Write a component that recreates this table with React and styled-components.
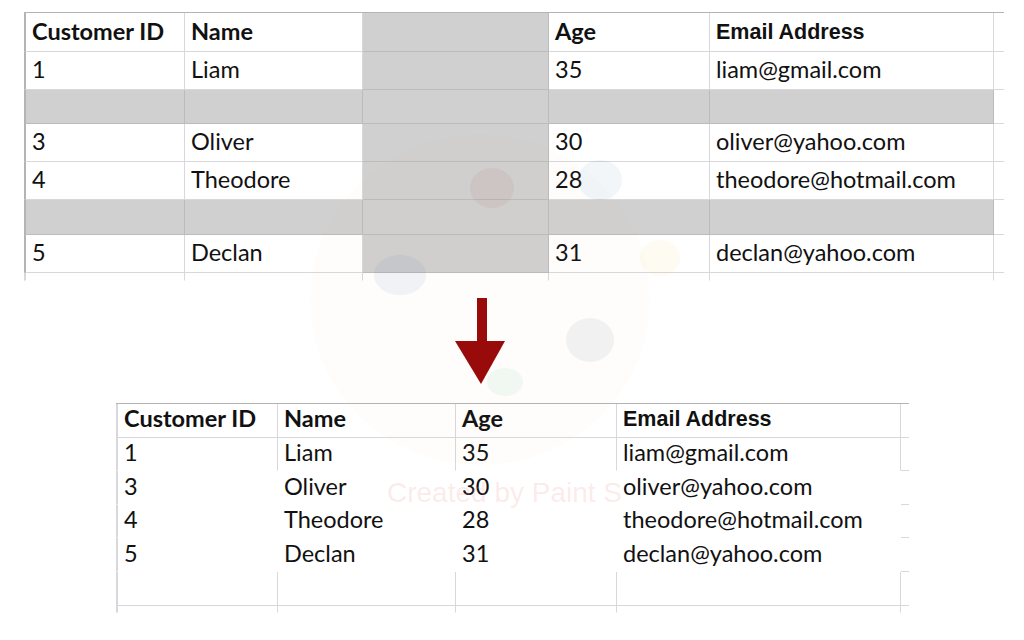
import React from 'react';
import styled, { createGlobalStyle } from 'styled-components';

const GlobalStyle = createGlobalStyle`
  html, body {
    margin: 0;
    padding: 0;
    background: #ffffff;
  }
  body {
    font-family: Lato, 'Liberation Sans', sans-serif;
    color: #111111;
  }
`;

const Page = styled.div`
  position: relative;
  width: 1024px;
  height: 640px;
  overflow: hidden;
  display: flex;
  flex-direction: column;
`;

const Sheet = styled.div`
  display: flex;
  flex-direction: column;
  align-self: flex-start;
  margin: ${(p) => p.$margin};
  border-top: 1px solid ${(p) => p.$edge};
`;

const Row = styled.div`
  display: flex;
  height: ${(p) => p.$h}px;
`;

const Cell = styled.div`
  box-sizing: border-box;
  flex: none;
  width: ${(p) => p.$w}px;
  display: flex;
  align-items: flex-end;
  padding: 0 0 ${(p) => p.$pb}px 6px;
  background: ${(p) => (p.$fill ? '#d0d0d0' : 'transparent')};
  border-left: ${(p) => (p.$first ? `2px solid ${p.$edge}` : 'none')};
  border-right: 1px solid ${(p) => p.$right || 'transparent'};
  border-bottom: 1px solid ${(p) => p.$bottom || 'transparent'};
  font-family: ${(p) =>
    p.$arial ? "'Liberation Sans', Arial, sans-serif" : "Lato, 'Liberation Sans', sans-serif"};
  font-size: ${(p) => (p.$arial ? 21.5 : 23.5)}px;
  font-weight: ${(p) => (p.$bold ? 700 : 400)};
  line-height: 1;
  white-space: nowrap;
  color: #111111;
`;

const Stub = styled.div`
  box-sizing: border-box;
  flex: none;
  width: ${(p) => p.$w}px;
  border-bottom: 1px solid ${(p) => p.$bottom || 'transparent'};
`;

const ArrowBox = styled.div`
  margin: 17px 0 0 455px;
  width: 50px;
  height: 86px;
  flex: none;
`;

const Watermark = styled.div`
  position: absolute;
  inset: 0;
  pointer-events: none;
`;

const WatermarkText = styled.div`
  position: absolute;
  left: 387px;
  top: 477px;
  font-family: 'Liberation Sans', Arial, sans-serif;
  font-size: 28px;
  color: rgba(240, 150, 150, 0.2);
  white-space: nowrap;
`;

const LIGHT = '#d8d8dc';
const DARK = '#bcbcbc';
const EDGE = '#b4b4b4';

const topCols = [161, 178, 186, 161, 284];
const topRows = [
  { h: 39, head: true, cells: ['Customer ID', 'Name', '', 'Age', 'Email Address'] },
  { h: 38, cells: ['1', 'Liam', '', '35', 'liam@gmail.com'] },
  { h: 34, blank: true },
  { h: 38, cells: ['3', 'Oliver', '', '30', 'oliver@yahoo.com'] },
  { h: 38, cells: ['4', 'Theodore', '', '28', 'theodore@hotmail.com'] },
  { h: 35, blank: true },
  { h: 38, cells: ['5', 'Declan', '', '31', 'declan@yahoo.com'] },
];

const bottomCols = [162, 178, 161, 284];
const bottomRows = [
  { h: 34, head: true, lines: true, under: true, cells: ['Customer ID', 'Name', 'Age', 'Email Address'] },
  { h: 33, lines: true, cells: ['1', 'Liam', '35', 'liam@gmail.com'] },
  { h: 34, cells: ['3', 'Oliver', '30', 'oliver@yahoo.com'] },
  { h: 33, cells: ['4', 'Theodore', '28', 'theodore@hotmail.com'] },
  { h: 34, cells: ['5', 'Declan', '31', 'declan@yahoo.com'] },
  { h: 34, lines: true, under: true, cells: ['', '', '', ''] },
];

function TopTable() {
  return (
    <Sheet $margin="12px 0 0 24px" $edge={EDGE}>
      {topRows.map((row, r) => (
        <Row key={r} $h={row.h}>
          {topCols.map((w, c) => {
            const fill = row.blank || c === 2;
            const text = row.blank ? '' : row.cells[c];
            return (
              <Cell
                key={c}
                $w={w}
                $first={c === 0}
                $edge={EDGE}
                $fill={fill}
                $bold={row.head}
                $arial={row.head && c === 4}
                $pb={row.head ? 8 : 8}
                $right={fill ? DARK : LIGHT}
                $bottom={fill ? DARK : LIGHT}
              >
                {text}
              </Cell>
            );
          })}
          <Stub $w={10} $bottom={LIGHT} />
        </Row>
      ))}
      <Row $h={8}>
        {topCols.map((w, c) => (
          <Cell key={c} $w={w} $first={c === 0} $edge={LIGHT} $right={LIGHT} $pb={0} />
        ))}
      </Row>
    </Sheet>
  );
}

function BottomTable() {
  return (
    <Sheet $margin="19px 0 0 116px" $edge={EDGE}>
      {bottomRows.map((row, r) => (
        <Row key={r} $h={row.h}>
          {bottomCols.map((w, c) => (
            <Cell
              key={c}
              $w={w}
              $first={c === 0}
              $edge={LIGHT}
              $bold={row.head}
              $arial={row.head && c === 3}
              $pb={row.head ? 7 : 6}
              $right={row.lines ? LIGHT : null}
              $bottom={row.under ? LIGHT : null}
            >
              {row.cells[c]}
            </Cell>
          ))}
          <Stub $w={8} $bottom={LIGHT} />
        </Row>
      ))}
      <Row $h={7}>
        {bottomCols.map((w, c) => (
          <Cell key={c} $w={w} $first={c === 0} $edge={LIGHT} $right={LIGHT} $pb={0} />
        ))}
      </Row>
    </Sheet>
  );
}

function DownArrow() {
  return (
    <ArrowBox>
      <svg width="50" height="86" viewBox="0 0 50 86">
        <rect x="22" y="0" width="10" height="44" fill="#980808" />
        <polygon points="0,43 50,43 26,86" fill="#980808" />
      </svg>
    </ArrowBox>
  );
}

function PaletteMark() {
  return (
    <Watermark>
      <svg width="1024" height="640" viewBox="0 0 1024 640">
        <g opacity="0.025">
          <ellipse cx="480" cy="300" rx="170" ry="165" fill="#c8b890" />
        </g>
        <g opacity="0.05">
          <ellipse cx="492" cy="188" rx="22" ry="20" fill="#a02020" />
          <ellipse cx="400" cy="275" rx="26" ry="20" fill="#2040a0" />
          <ellipse cx="590" cy="340" rx="24" ry="22" fill="#203040" />
          <ellipse cx="660" cy="258" rx="20" ry="18" fill="#e0c020" />
          <ellipse cx="505" cy="382" rx="18" ry="14" fill="#20a040" />
          <ellipse cx="600" cy="180" rx="22" ry="20" fill="#2060a0" />
        </g>
      </svg>
      <WatermarkText>Created by Paint S</WatermarkText>
    </Watermark>
  );
}

export default function App() {
  return (
    <Page>
      <GlobalStyle />
      <TopTable />
      <DownArrow />
      <BottomTable />
      <PaletteMark />
    </Page>
  );
}
